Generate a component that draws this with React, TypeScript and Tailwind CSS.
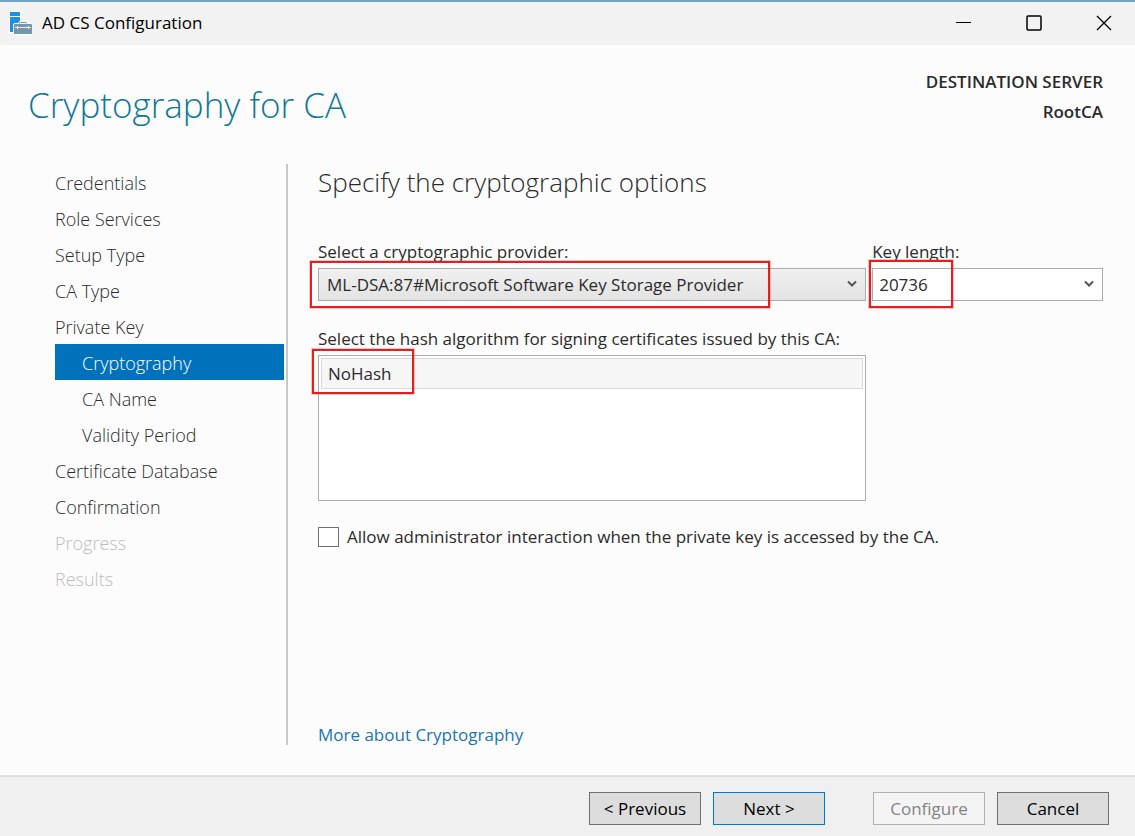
import React, { ReactNode, useState } from 'react';

interface Step {
  label: string;
  nested?: boolean;
  disabled?: boolean;
}

const steps: Step[] = [
  { label: 'Credentials' },
  { label: 'Role Services' },
  { label: 'Setup Type' },
  { label: 'CA Type' },
  { label: 'Private Key' },
  { label: 'Cryptography', nested: true },
  { label: 'CA Name', nested: true },
  { label: 'Validity Period', nested: true },
  { label: 'Certificate Database' },
  { label: 'Confirmation' },
  { label: 'Progress', disabled: true },
  { label: 'Results', disabled: true },
];

const ServerIcon = () => (
  <svg width="24" height="24" viewBox="0 0 24 24" aria-hidden="true">
    <path d="M0 0h12v22H0z" fill="#fff" />
    <path d="M1 1h10v4H1zM1 6h10v15H1z" fill="#1f8fe0" />
    <path d="M4 14q0-2 2-2h3q1-2 3-2h3q2 0 3 2h3q2 0 2 2v10H4z" fill="#fff" />
    <path d="M5 14q0-1 1-1h16q1 0 1 1v9H5z" fill="#7796a9" />
    <path d="M10 12.5q1-1 2-1h4q1 0 2 1" fill="none" stroke="#7796a9" />
    <path d="M6 16.5h16" fill="none" stroke="#fff" strokeWidth="0.8" />
    <path d="M8.5 15.2v2.600M19.5 15.2v2.600" fill="none" stroke="#fff" />
  </svg>
);

const Chevron = () => (
  <svg className="pointer-events-none absolute right-2 top-[10px] h-3 w-3" viewBox="0 0 12 12" aria-hidden="true">
    <path d="M2 3.500l4 4 4-4" fill="none" stroke="#555" strokeWidth="2" />
  </svg>
);

// Red frame drawn over a field to call it out
const Highlight = ({ className }: { className: string }) => (
  <span className={`pointer-events-none absolute border-2 border-[#e81e1e] ring-1 ring-[#e81e1e]/25 ${className}`} />
);

const FooterButton = ({ children, className = '', disabled = false }: { children: ReactNode; className?: string; disabled?: boolean }) => (
  <button
    type="button"
    disabled={disabled}
    className={`h-[33px] w-28 border pt-px ${className || 'border-[#707070] bg-[#ddd] text-black'}`}
  >
    {children}
  </button>
);

const App: React.FC = () => {
  const [active, setActive] = useState('Cryptography');

  return (
    <div className="flex min-h-screen flex-col bg-[#fcfcfc] font-['Open_Sans','Noto_Sans',sans-serif] text-[17px] leading-6 text-[#2b2b2b]">
      {/* Title bar */}
      <header className="flex h-[45px] items-center justify-between border-t-2 border-[#6fa3c0] bg-[#f2f2f2] pb-[2px] pl-[9px] pr-[23px]">
        <div className="flex items-center gap-[9px] text-black">
          <ServerIcon />
          <span>AD CS Configuration</span>
        </div>
        <div className="flex gap-[54px] text-black">
          <button type="button" aria-label="Minimize">
            <svg width="16" height="16" viewBox="0 0 16 16"><path d="M0 7.500h15" stroke="currentColor" /></svg>
          </button>
          <button type="button" aria-label="Maximize">
            <svg width="16" height="16" viewBox="0 0 16 16"><rect x="1" y="1" width="14" height="14" rx="1" fill="none" stroke="currentColor" strokeWidth="1.500" /></svg>
          </button>
          <button type="button" aria-label="Close">
            <svg width="16" height="16" viewBox="0 0 16 16"><path d="M1 1l14 14M15 1L1 15" stroke="currentColor" strokeWidth="1.300" /></svg>
          </button>
        </div>
      </header>

      {/* Page heading */}
      <div className="flex items-start justify-between pb-[35px] pl-7 pr-8 pt-[22px]">
        <h1 className="pt-[14px] text-[35px] font-light leading-[48px] text-[#0f7898]">Cryptography for CA</h1>
        <div className="text-right font-semibold leading-[30px]">
          <p>DESTINATION SERVER</p>
          <p>RootCA</p>
        </div>
      </div>

      <div className="flex flex-grow pb-[30px] pl-[55px] pr-8">
        {/* Wizard steps */}
        <nav className="w-[233px] shrink-0 border-r-2 border-[#c8c8c8] pr-[2px]">
          <ul>
            {steps.map((step) => (
              <li key={step.label}>
                <button
                  type="button"
                  disabled={step.disabled}
                  onClick={() => setActive(step.label)}
                  className={`block h-9 w-full pt-px text-left text-[18px] font-light ${step.nested ? 'pl-[27px]' : ''} ${
                    step.disabled ? 'text-[#bdbdbd]' : active === step.label ? 'bg-[#0072bc] text-white' : ''
                  }`}
                >
                  {step.label}
                </button>
              </li>
            ))}
          </ul>
        </nav>

        {/* Options */}
        <main className="flex flex-grow flex-col pl-[30px]">
          <h2 className="text-[26px] font-light leading-9">Specify the cryptographic options</h2>

          <div className="mt-10 grid grid-cols-[19fr_8fr] gap-x-[6px]">
            <div>
              <label htmlFor="provider" className="block whitespace-nowrap">Select a cryptographic provider:</label>
              <div className="relative mt-1">
                <select id="provider" className="block h-[33px] w-full appearance-none border border-[#acacac] bg-linear-to-b from-[#f0f0f0] to-[#e3e3e3] pl-2 pt-px">
                  <option>ML-DSA:87#Microsoft Software Key Storage Provider</option>
                </select>
                <Chevron />
                <Highlight className="-left-2 -top-[7px] h-[47px] w-[460px]" />
              </div>
            </div>
            <div>
              <label htmlFor="key-length" className="block whitespace-nowrap">Key length:</label>
              <div className="relative mt-1">
                <select id="key-length" className="block h-[33px] w-full appearance-none border border-[#acacac] bg-white pl-[6px] pt-px">
                  <option>20736</option>
                </select>
                <Chevron />
                <Highlight className="-left-[3px] -top-2 h-12 w-[84px]" />
              </div>
            </div>

            <div className="mt-[26px]">
              <p id="hash-label" className="whitespace-nowrap">
                Select the hash algorithm for signing certificates issued by this CA:
              </p>
              <div className="relative mt-1">
                <ul role="listbox" aria-labelledby="hash-label" className="h-[146px] border border-[#abadb3] bg-white p-[2px]">
                  <li role="option" aria-selected="true" className="border border-[#dadada] bg-[#f6f6f6] px-[6px] pb-[2px] pt-[3px]">
                    NoHash
                  </li>
                </ul>
                <Highlight className="-left-[6px] -top-[6px] h-[45px] w-[102px]" />
              </div>
            </div>
          </div>

          <label className="mt-6 flex items-center gap-2">
            <input type="checkbox" className="h-5 w-[21px] appearance-none border border-[#707070] bg-white checked:bg-[#0072bc]" />
            Allow administrator interaction when the private key is accessed by the CA.
          </label>

          <a href="#" className="mt-auto self-start leading-5 text-[#1a74b3]">More about Cryptography</a>
        </main>
      </div>

      <footer className="flex justify-end gap-3 border-t-2 border-[#dfdfdf] bg-[#f0f0f0] pb-[11px] pr-[26px] pt-[15px]">
        <FooterButton>&lt; Previous</FooterButton>
        <FooterButton className="mr-9 border-[#0078d7] bg-[#ddd] text-black">Next &gt;</FooterButton>
        <FooterButton disabled className="border-[#adb2b5] bg-[#f4f4f4] text-[#838383]">Configure</FooterButton>
        <FooterButton>Cancel</FooterButton>
      </footer>
    </div>
  );
};

export default App;
